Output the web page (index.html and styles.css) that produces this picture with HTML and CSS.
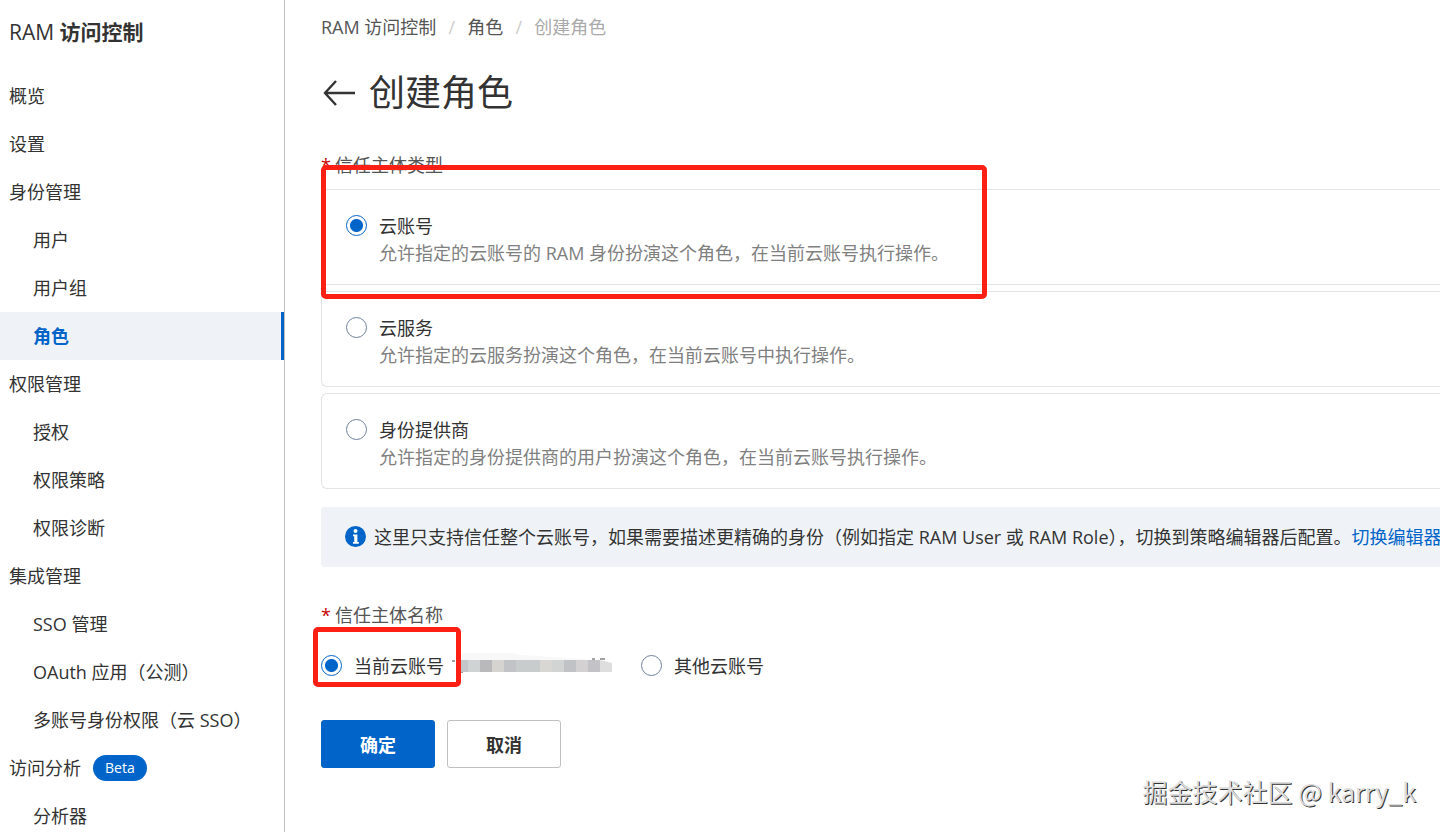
FILE: index.html
```html
<!DOCTYPE html>
<html lang="zh-CN">
<head>
    <meta charset="UTF-8">
    <meta name="viewport" content="width=device-width, initial-scale=1.0">
    <title>RAM 访问控制 - 创建角色</title>
    <link rel="stylesheet" href="styles.css">
</head>
<body>
    <!-- Sidebar -->
    <aside class="sidebar">
        <h2 class="product"><span class="product-prefix">RAM</span> 访问控制</h2>
        <nav>
            <a href="#">概览</a>
            <a href="#">设置</a>
            <a href="#">身份管理</a>
            <a href="#" class="sub">用户</a>
            <a href="#" class="sub">用户组</a>
            <a href="#" class="sub active">角色</a>
            <a href="#">权限管理</a>
            <a href="#" class="sub">授权</a>
            <a href="#" class="sub">权限策略</a>
            <a href="#" class="sub">权限诊断</a>
            <a href="#">集成管理</a>
            <a href="#" class="sub">SSO 管理</a>
            <a href="#" class="sub">OAuth 应用（公测）</a>
            <a href="#" class="sub">多账号身份权限（云 SSO）</a>
            <a href="#">访问分析 <span class="beta">Beta</span></a>
            <a href="#" class="sub">分析器</a>
        </nav>
    </aside>

    <!-- Create role form -->
    <main class="content">
        <div class="breadcrumb">
            <a href="#">RAM 访问控制</a>
            <span class="slash">/</span>
            <a href="#">角色</a>
            <span class="slash">/</span>
            <span class="current">创建角色</span>
        </div>
        <div class="title">
            <a href="#" class="back" aria-label="返回">
                <svg width="34" height="28" viewBox="0 0 34 28" fill="none" stroke="#333" stroke-width="2.4">
                    <path d="M34 14H4M15 2L4 14l11 12"/>
                </svg>
            </a>
            <h1>创建角色</h1>
        </div>

        <form>
            <div class="field" role="radiogroup" aria-labelledby="typeLabel">
                <div class="field-label" id="typeLabel"><span class="required">*</span>信任主体类型</div>
                <div class="cards">
                    <label class="card">
                        <input type="radio" name="type" checked>
                        <span class="card-text">
                            <span>云账号</span>
                            <span class="desc">允许指定的云账号的 RAM 身份扮演这个角色，在当前云账号执行操作。</span>
                        </span>
                    </label>
                    <label class="card">
                        <input type="radio" name="type">
                        <span class="card-text">
                            <span>云服务</span>
                            <span class="desc">允许指定的云服务扮演这个角色，在当前云账号中执行操作。</span>
                        </span>
                    </label>
                    <label class="card">
                        <input type="radio" name="type">
                        <span class="card-text">
                            <span>身份提供商</span>
                            <span class="desc">允许指定的身份提供商的用户扮演这个角色，在当前云账号执行操作。</span>
                        </span>
                    </label>
                </div>
                <div class="mark mark-type"></div>
            </div>

            <div class="notice">
                <svg width="21" height="22" viewBox="0 0 21 22">
                    <circle cx="10.5" cy="10.5" r="10.5" fill="#0064c8"/>
                    <circle cx="10.5" cy="5" r="2" fill="#fff"/>
                    <path d="M8 8.4h4.4v7.6h1.4v1.8H8v-1.8h1.2v-5.8H8z" fill="#fff"/>
                </svg>
                <span>这里只支持信任整个云账号，如果需要描述更精确的身份（例如指定 RAM User 或 RAM Role），切换到策略编辑器后配置。<a href="#">切换编辑器</a></span>
            </div>

            <div class="field" role="radiogroup" aria-labelledby="nameLabel">
                <div class="field-label" id="nameLabel"><span class="required">*</span>信任主体名称</div>
                <div class="options">
                    <label class="option">
                        <input type="radio" name="account" checked>
                        <span>当前云账号</span>
                        <svg class="masked" width="160" height="24" viewBox="0 0 160 24">
                            <path d="M8 0l42-2 20 4 60 4 20 2v2H8z" fill="#f8f8f8"/>
                            <path d="M0 8h3M8 19h3M140 6h3M148 6h5" stroke="#444" fill="none"/>
                            <rect x="8" y="7" width="8" height="12" fill="#c3c5c9"/>
                            <rect x="16" y="7" width="12" height="12" fill="#cfd3d4"/>
                            <rect x="28" y="7" width="12" height="12" fill="#b9b8ba"/>
                            <rect x="40" y="7" width="12" height="12" fill="#d6d4d1"/>
                            <rect x="52" y="7" width="12" height="12" fill="#c1c3c7"/>
                            <rect x="64" y="7" width="24" height="12" fill="#c9cccd"/>
                            <rect x="88" y="7" width="12" height="12" fill="#d9d7d4"/>
                            <rect x="100" y="7" width="12" height="12" fill="#d2d3d3"/>
                            <rect x="112" y="7" width="12" height="12" fill="#c1c2c6"/>
                            <rect x="124" y="7" width="12" height="12" fill="#d3d1d1"/>
                            <rect x="136" y="7" width="12" height="12" fill="#c2c2c7"/>
                            <path d="M148 7l12 3v9h-12z" fill="#dedede"/>
                        </svg>
                    </label>
                    <label class="option">
                        <input type="radio" name="account">
                        <span>其他云账号</span>
                    </label>
                </div>
                <div class="mark mark-name"></div>
            </div>

            <div class="actions">
                <button type="submit" class="primary">确定</button>
                <button type="button">取消</button>
            </div>
        </form>
    </main>

    <div class="watermark">掘金技术社区 @ karry_k</div>
</body>
</html>
```
FILE: styles.css
```css
* {
    box-sizing: border-box;
}
body {
    margin: 0;
    height: 100vh;
    display: flex;
    overflow: hidden;
    position: relative;
    font-family: "Open Sans", "Noto Sans CJK SC", sans-serif;
    font-size: 18px;
    line-height: 27px;
    color: #333;
    background-color: #fff;
}
a {
    color: inherit;
    text-decoration: none;
}

/* Sidebar */
.sidebar {
    flex: 0 0 285px;
    border-right: 1px solid #c0c0c0;
    overflow: hidden;
}
.product {
    margin: 0;
    padding-left: 9px;
    height: 72px;
    font-size: 21px;
    font-weight: bold;
    line-height: 64px;
}
.product-prefix {
    font-weight: 500;
}
.sidebar nav a {
    display: flex;
    align-items: center;
    height: 48px;
    padding-left: 9px;
}
.sidebar nav .sub {
    padding-left: 33px;
}
.sidebar nav .active {
    background-color: #eff3f8;
    border-right: 3px solid #0064c8;
    color: #0064c8;
    font-weight: bold;
}
.beta {
    margin-left: 12px;
    padding: 0 12px;
    border-radius: 13px;
    background-color: #0064c8;
    color: #fff;
    font-size: 14px;
    line-height: 26px;
}

/* Content */
.content {
    flex: 1;
    min-width: 0;
    padding: 14px 0 0 36px;
    overflow: hidden;
}
.breadcrumb {
    display: flex;
    color: #555;
}
.slash {
    width: 31px;
    text-align: center;
    color: #ccc;
}
.current {
    color: #aaa;
}
.title {
    display: flex;
    align-items: center;
    gap: 14px;
    height: 54px;
    margin: 25px 0 32px;
}
.back {
    display: flex;
}
h1 {
    margin: 0;
    font-size: 36px;
    font-weight: normal;
    line-height: 54px;
}
.field {
    position: relative;
}
.field-label {
    color: #555;
}
.required {
    display: inline-block;
    width: 14px;
    color: #c80000;
}
.cards {
    display: flex;
    flex-direction: column;
    gap: 6px;
    margin-top: 10px;
}
.card {
    display: flex;
    gap: 12px;
    height: 96px;
    padding: 23px 24px;
    border: 1px solid #e3e4e6;
    border-right: none;
    border-radius: 6px 0 0 6px;
}
.card-text {
    display: flex;
    flex-direction: column;
}
.desc {
    color: #808080;
}
input[type="radio"] {
    appearance: none;
    flex: none;
    width: 21px;
    height: 21px;
    margin: 2px 0 0;
    border: 1px solid #6f819b;
    border-radius: 50%;
    background-color: #fff;
}
input[type="radio"]:checked {
    border-color: #0064c8;
    background-image: radial-gradient(circle, #0064c8 6px, transparent 7px);
}
.notice {
    display: flex;
    align-items: center;
    gap: 8px;
    height: 60px;
    margin: 18px 0 35px;
    padding-left: 24px;
    border-radius: 3px 0 0 3px;
    background-color: #eff3f8;
    white-space: nowrap;
    overflow: hidden;
}
.notice svg {
    flex: none;
}
.notice a {
    color: #0064c8;
}
.options {
    display: flex;
    gap: 29px;
    margin-top: 24px;
}
.option {
    display: flex;
    gap: 12px;
}
.masked {
    margin-left: -4px;
}
.actions {
    display: flex;
    gap: 12px;
    margin-top: 40px;
}
button {
    width: 114px;
    height: 48px;
    border: 1px solid #c0c0c0;
    border-radius: 3px;
    background-color: #fff;
    color: #333;
    font-family: inherit;
    font-size: 18px;
    font-weight: bold;
}
button.primary {
    border-color: #0064c8;
    background-color: #0064c8;
    color: #fff;
}

/* Red highlight frames */
.mark {
    position: absolute;
    border: 5px solid #fc1f14;
    border-radius: 5px;
    pointer-events: none;
}
.mark-type {
    top: 13px;
    left: 0;
    width: 666px;
    height: 134px;
}
.mark-name {
    top: 25px;
    left: -8px;
    width: 148px;
    height: 60px;
}

.watermark {
    position: absolute;
    right: 24px;
    bottom: 23px;
    font-family: "Noto Sans CJK SC", sans-serif;
    font-size: 25px;
    line-height: 36px;
    color: #dcdcdc;
    text-shadow: 1px 1px 0 #333;
}
```
